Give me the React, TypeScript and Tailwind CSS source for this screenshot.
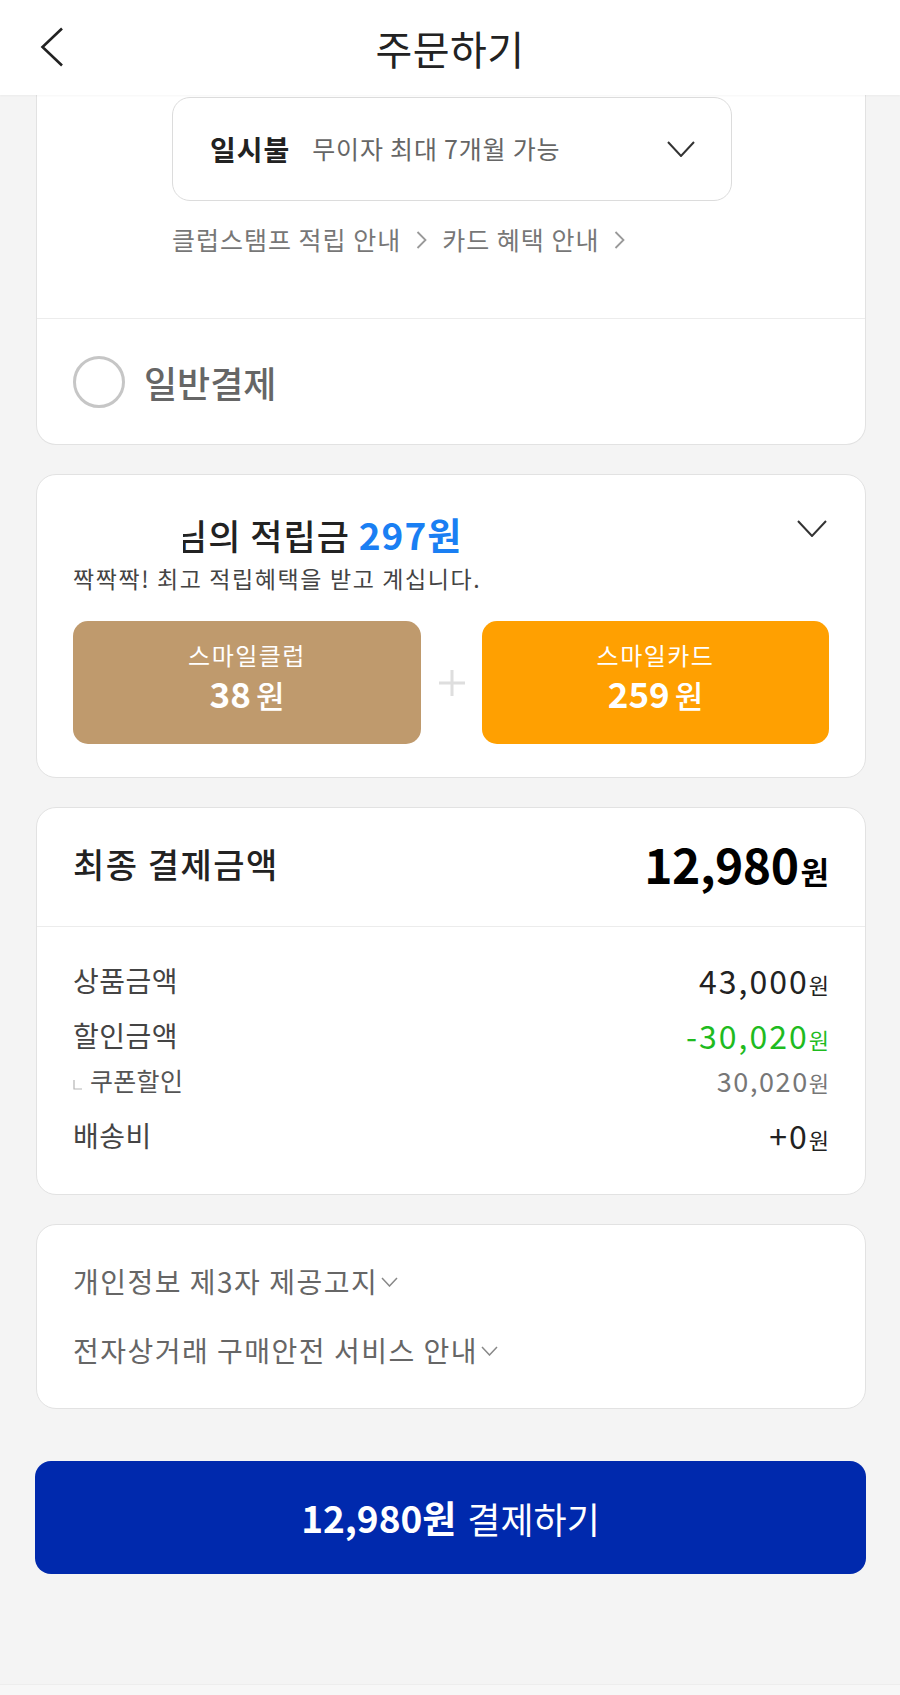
import React from "react";

const Chevron = ({ className = "", w = 26, h = 16, stroke = "#333", sw = 2 }: { className?: string; w?: number; h?: number; stroke?: string; sw?: number }) => (
  <svg className={className} width={w} height={h} viewBox={`0 0 ${w} ${h}`} fill="none">
    <polyline points={`1,1 ${w / 2},${h - 1} ${w - 1},1`} stroke={stroke} strokeWidth={sw} strokeLinejoin="miter" />
  </svg>
);

const RightArrow = () => (
  <svg width="11" height="20" viewBox="0 0 11 20" fill="none" className="mx-[15px]">
    <polyline points="1.5,2 9.5,10 1.5,18" stroke="#999" strokeWidth="1.8" />
  </svg>
);

export default function App() {
  return (
    <div
      className="w-[900px] h-[1695px] bg-[#f4f4f4] flex flex-col overflow-hidden"
      style={{ fontFamily: '"Noto Sans CJK KR", "Noto Sans", sans-serif' }}
    >
      {/* Header */}
      <div className="h-[95px] bg-white relative flex items-center justify-center shrink-0 shadow-[0_1px_2px_rgba(0,0,0,0.04)] z-10">
        <svg className="absolute left-[40px] top-[27px]" width="24" height="40" viewBox="0 0 24 40" fill="none">
          <polyline points="22,1.5 2.5,20 22,38.5" stroke="#222" strokeWidth="2.6" />
        </svg>
        <div className="text-[40px] text-[#222] leading-none tracking-[0.5px]">주문하기</div>
      </div>

      <div className="pl-[36px] pr-[34px] flex flex-col">
        {/* Card 1 */}
        <div className="bg-white border-x border-b border-[#e2e2e2] rounded-b-[20px] flex flex-col">
          <div className="ml-[135px] mt-[2px] w-[560px] h-[104px] border border-[#dcdcdc] rounded-[18px] flex items-center pl-[37px] pr-[36px]">
            <span className="text-[28px] font-bold text-[#222] tracking-[1px]">일시불</span>
            <span className="ml-[22px] text-[25px] text-[#666] tracking-[0.8px]">무이자 최대 7개월 가능</span>
            <Chevron className="ml-auto" w={28} h={16} stroke="#333" sw={2} />
          </div>
          <div className="ml-[135px] mt-[24px] h-[30px] flex items-center text-[25px] text-[#777] tracking-[1px]">
            <span>클럽스탬프 적립 안내</span>
            <RightArrow />
            <span>카드 혜택 안내</span>
            <RightArrow />
          </div>
          <div className="mt-[63px] h-[1px] bg-[#ececec]" />
          <div className="h-[125px] flex items-center pl-[36px]">
            <div className="w-[52px] h-[52px] rounded-full border-[3px] border-[#c6c6c6]" />
            <span className="ml-[19px] text-[36px] font-medium text-[#666]">일반결제</span>
          </div>
        </div>

        {/* Card 2 */}
        <div className="mt-[29px] bg-white border border-[#e2e2e2] rounded-[20px] px-[36px] pt-[39px] pb-[33px] flex flex-col">
          <div className="h-[40px] flex items-center relative">
            <div className="ml-[102px] text-[35px] font-medium text-[#222] leading-none whitespace-nowrap tracking-[1px]">
              <span>님의 적립금 </span>
              <span className="text-[#1a7ff3] font-bold text-[37px]">297원</span>
            </div>
            <div className="absolute left-0 top-0 h-full w-[110px] bg-white" />
            <Chevron className="ml-auto mr-[2px] mb-[12px]" w={30} h={17} stroke="#333" sw={2} />
          </div>
          <div className="mt-[9px] h-[30px] flex items-center text-[23px] text-[#444] tracking-[1.6px] whitespace-nowrap">
            짝짝짝! 최고 적립혜택을 받고 계십니다.
          </div>
          <div className="mt-[28px] flex items-center">
            <div className="w-[348px] h-[123px] rounded-[15px] bg-[#bf9a6d] flex flex-col items-center justify-center pb-[12px] text-white">
              <div className="text-[24px] leading-[28px] tracking-[1.5px]">스마일클럽</div>
              <div className="mt-[6px] leading-[36px] flex items-baseline">
                <span className="text-[35px] font-bold">38</span>
                <span className="ml-[5px] text-[31px] font-medium">원</span>
              </div>
            </div>
            <div className="flex-1 flex justify-center">
              <svg width="26" height="26" viewBox="0 0 26 26">
                <rect x="11.5" y="0" width="3" height="26" fill="#dedede" />
                <rect x="0" y="11.5" width="26" height="3" fill="#dedede" />
              </svg>
            </div>
            <div className="w-[347px] h-[123px] rounded-[15px] bg-[#ffa001] flex flex-col items-center justify-center pb-[12px] text-white">
              <div className="text-[24px] leading-[28px] tracking-[1.5px]">스마일카드</div>
              <div className="mt-[6px] leading-[36px] flex items-baseline">
                <span className="text-[35px] font-bold">259</span>
                <span className="ml-[5px] text-[31px] font-medium">원</span>
              </div>
            </div>
          </div>
        </div>

        {/* Card 3 */}
        <div className="mt-[29px] bg-white border border-[#e2e2e2] rounded-[20px] flex flex-col">
          <div className="h-[118px] px-[36px] pb-[8px] flex items-center justify-between">
            <span className="text-[34px] font-medium text-[#222] tracking-[1.5px]">최종 결제금액</span>
            <span className="flex items-baseline text-black">
              <span className="text-[48px] font-bold tracking-[-0.5px]">12,980</span>
              <span className="ml-[2px] text-[31px] font-bold">원</span>
            </span>
          </div>
          <div className="h-[1px] bg-[#ececec]" />
          <div className="px-[36px] pt-[26px] pb-[32px] flex flex-col">
            <div className="h-[54px] flex items-center justify-between">
              <span className="text-[28px] text-[#444] tracking-[0.5px]">상품금액</span>
              <span className="flex items-baseline text-[#222]">
                <span className="text-[32px] tracking-[2px]">43,000</span>
                <span className="text-[22px]">원</span>
              </span>
            </div>
            <div className="h-[56px] flex items-center justify-between">
              <span className="text-[28px] text-[#444] tracking-[0.5px]">할인금액</span>
              <span className="flex items-baseline text-[#1fbb1f]">
                <span className="text-[32px] tracking-[2px]">-30,020</span>
                <span className="text-[22px]">원</span>
              </span>
            </div>
            <div className="h-[36px] flex items-center justify-between">
              <span className="flex items-center">
                <svg width="9" height="10" viewBox="0 0 9 10" className="mr-[8px] mt-[8px]">
                  <polyline points="1,0 1,9 9,9" stroke="#b5b5b5" strokeWidth="1.2" fill="none" />
                </svg>
                <span className="text-[25px] text-[#555] tracking-[0.3px]">쿠폰할인</span>
              </span>
              <span className="flex items-baseline text-[#777]">
                <span className="text-[27px] tracking-[1.6px]">30,020</span>
                <span className="text-[22px]">원</span>
              </span>
            </div>
            <div className="mt-[9px] h-[54px] flex items-center justify-between">
              <span className="text-[28px] text-[#444] tracking-[0.5px]">배송비</span>
              <span className="flex items-baseline text-[#222]">
                <span className="text-[32px] tracking-[2px]">+0</span>
                <span className="text-[22px]">원</span>
              </span>
            </div>
          </div>
        </div>

        {/* Card 4 */}
        <div className="mt-[29px] bg-white border border-[#e2e2e2] rounded-[20px] px-[36px] pt-[36px] pb-[38px] flex flex-col">
          <div className="h-[40px] flex items-center text-[28px] text-[#666] tracking-[1.5px] whitespace-nowrap">
            <span>개인정보 제3자 제공고지</span>
            <Chevron className="ml-[3px] mt-[2px]" w={17} h={10} stroke="#888" sw={1.5} />
          </div>
          <div className="mt-[29px] h-[40px] flex items-center text-[28px] text-[#666] tracking-[1.5px] whitespace-nowrap">
            <span>전자상거래 구매안전 서비스 안내</span>
            <Chevron className="ml-[3px] mt-[2px]" w={17} h={10} stroke="#888" sw={1.5} />
          </div>
        </div>

        {/* Pay button */}
        <div className="mt-[52px] -ml-[1px] h-[113px] rounded-[16px] bg-[#0029ad] flex items-center justify-center text-white">
          <span className="text-[37px] font-bold">12,980원</span>
          <span className="ml-[11px] text-[36px]">결제하기</span>
        </div>
      </div>

      <div className="flex-1" />
      <div className="h-[11px] bg-[#f7f7f7] border-t border-[#ededed] shrink-0" />
    </div>
  );
}
